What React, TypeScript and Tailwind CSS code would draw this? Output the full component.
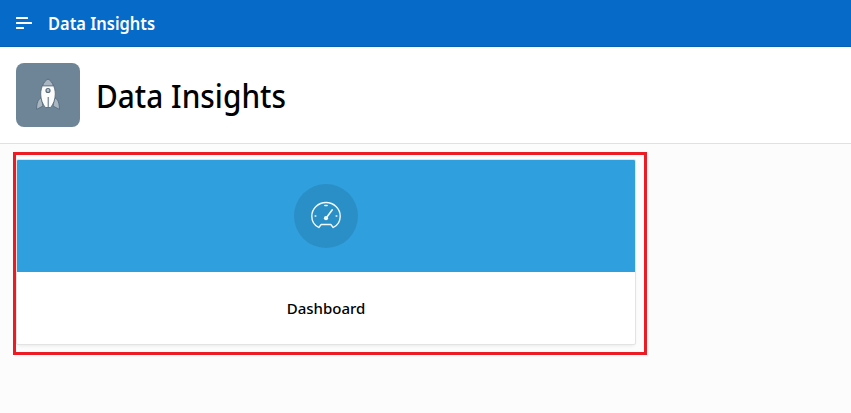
function MenuIcon() {
  return (
    <svg width="16" height="12" viewBox="0 0 16 12" fill="white" className="shrink-0">
      <rect x="0" y="0" width="12" height="2" rx="0.5" />
      <rect x="0" y="5" width="16" height="2" rx="0.5" />
      <rect x="0" y="10" width="8" height="2" rx="0.5" />
    </svg>
  );
}

function RocketIcon() {
  return (
    <svg width="32" height="34" viewBox="0 0 32 34" fill="none" stroke="#566b7d" strokeWidth="0.9" strokeLinejoin="round">
      <path d="M9.2 19.5C6 22 4.6 24.5 4.6 31.4L11 28Z" fill="#a9b6c2" />
      <path d="M22.8 19.5C26 22 27.4 24.5 27.4 31.4L21 28Z" fill="#a9b6c2" />
      <path d="M16 1C12.5 3.2 8.7 8.5 8.7 16C8.7 21.5 10.8 26.5 13.4 29.5H18.6C21.2 26.5 23.3 21.5 23.3 16C23.3 8.5 19.5 3.2 16 1Z" fill="#fcfcfc" />
      <path d="M16 1C13.6 2.4 11.6 4.5 10.6 7.9H21.4C20.4 4.5 18.4 2.4 16 1Z" fill="#a9b6c2" />
      <circle cx="16" cy="12.5" r="2" fill="#b9c4cd" strokeWidth="1.2" />
      <path d="M16.3 19V29" strokeWidth="1.5" stroke="#8493a1" />
    </svg>
  );
}

function GaugeIcon() {
  return (
    <svg width="32" height="32" viewBox="0 0 32 32" fill="none" stroke="#f2f8fc" strokeWidth="1.4" strokeLinecap="round" strokeLinejoin="round">
      <path d="M8.8 27.5C4.7 25.4 1.8 21.2 1.8 16.2C1.8 8.6 8.2 2.5 16 2.5S30.2 8.6 30.2 16.2C30.2 21.2 27.3 25.4 23.2 27.5L20.8 24.5H11.2Z" />
      <path d="M16.2 18L22.3 9.8" strokeWidth="1.6" />
      <circle cx="16" cy="18.2" r="2.1" fill="#f2f8fc" stroke="none" />
      <path d="M14.9 5.5H17.1M5.2 16H5.8M26.2 16H26.8" strokeWidth="1.6" />
    </svg>
  );
}

export default function App() {
  return (
    <div className="flex h-screen flex-col overflow-hidden bg-[#fcfcfc] font-['Noto_Sans',sans-serif] text-black">
      <header className="flex h-[47px] shrink-0 items-center gap-4 border-b border-[#0561b8] bg-[#056ac8] px-4 text-white">
        <MenuIcon />
        <span className="origin-left scale-x-[0.967] whitespace-nowrap pt-0.5 text-[17px] font-semibold leading-6">Data Insights</span>
      </header>
      <section className="flex h-[97px] shrink-0 items-center gap-4 border-b border-[#e1e1e1] bg-white px-4">
        <div className="flex size-16 items-center justify-center rounded-lg bg-[#6e8598]">
          <RocketIcon />
        </div>
        <h1 className="origin-left scale-x-[0.932] whitespace-nowrap pt-0.5 text-[32px] font-medium leading-10">Data Insights</h1>
      </section>
      <main className="px-[13px] pt-2">
        <div className="h-[203px] w-[634px] border-[3px] border-[#ed1c24] pt-1">
          <a className="flex h-[186px] w-[620px] flex-col overflow-hidden rounded-xs border border-[#e3e3e3] bg-white shadow-[0_2px_4px_-2px_rgba(0,0,0,0.12)]">
            <div className="flex h-28 shrink-0 items-center justify-center bg-[#309fdd]">
              <div className="flex size-16 items-center justify-center rounded-full bg-[#2b8fc7]">
                <GaugeIcon />
              </div>
            </div>
            <div className="flex flex-1 items-center justify-center text-[15px] font-medium leading-5">
              <span>Dashboard</span>
            </div>
          </a>
        </div>
      </main>
    </div>
  );
}
